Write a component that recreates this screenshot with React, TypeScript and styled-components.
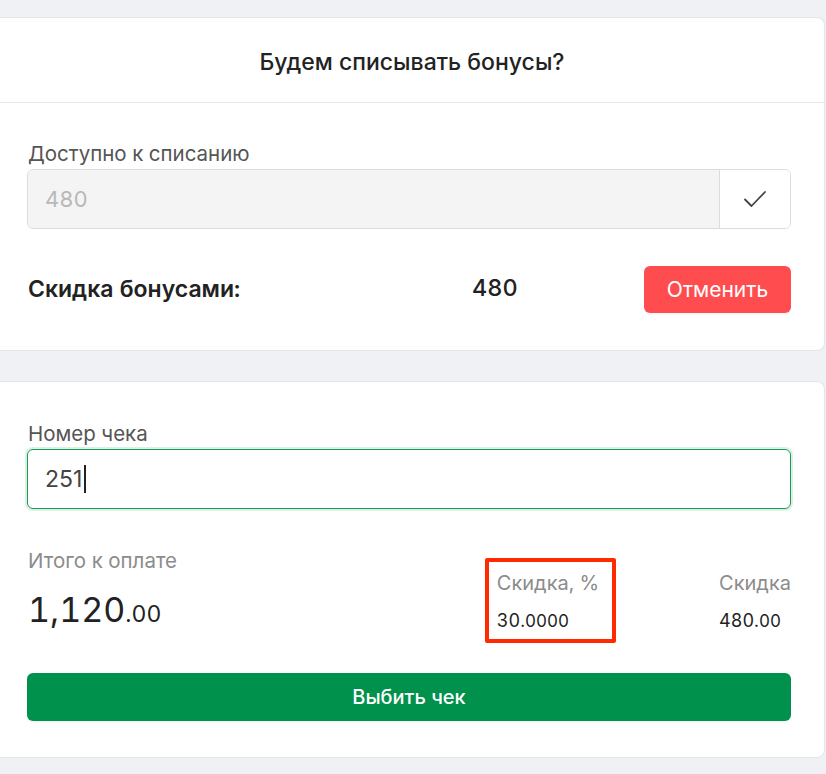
import React from "react";
import styled, { createGlobalStyle } from "styled-components";

const Global = createGlobalStyle`
  html, body { margin: 0; padding: 0; }
  body {
    background: #f0f1f5;
    font-family: Inter, "Noto Sans", "Liberation Sans", sans-serif;
    font-variant-numeric: tabular-nums;
    color: #222;
  }
`;

const Page = styled.div`
  padding-top: 17px;
  display: flex;
  flex-direction: column;
  gap: 30px;
  height: 774px;
  box-sizing: border-box;
  overflow: hidden;
`;

const Card = styled.section`
  background: #fff;
  border: 1px solid #e4e5e8;
  border-left: none;
  border-radius: 0 8px 8px 0;
  margin-right: 1px;
`;

const CardHeader = styled.header`
  height: 85px;
  box-sizing: border-box;
  padding-top: 3px;
  display: flex;
  align-items: center;
  justify-content: center;
  border-bottom: 1px solid #e6e6e6;
  font-size: 23px;
  font-weight: 500;
  color: #222;
`;

const CardBody = styled.div<{ $top: number; $bottom: number }>`
  padding: ${(p) => p.$top}px 33px ${(p) => p.$bottom}px 27px;
  display: flex;
  flex-direction: column;
`;

const Label = styled.div<{ $muted?: boolean }>`
  font-size: 20.5px;
  line-height: 24px;
  color: ${(p) => (p.$muted ? "#8c8c8c" : "#555")};
  margin-left: 1px;
  margin-bottom: 3px;
`;

const InputGroup = styled.div`
  display: flex;
  height: 60px;
  border: 1px solid #dcdcdc;
  border-radius: 6px;
  overflow: hidden;
  box-sizing: border-box;
`;

const DisabledField = styled.div`
  flex: 1;
  background: #f4f4f4;
  display: flex;
  align-items: center;
  padding-left: 17px;
  font-size: 22px;
  color: #b8b8b8;
`;

const Addon = styled.div`
  width: 70px;
  border-left: 1px solid #dcdcdc;
  display: flex;
  align-items: center;
  justify-content: center;
  background: #fff;
`;

const SummaryRow = styled.div`
  margin-top: 37px;
  display: grid;
  grid-template-columns: 445px auto 1fr;
  align-items: center;
`;

const Strong = styled.div`
  font-size: 23px;
  font-weight: 600;
  color: #222;
  margin-left: 1px;
  margin-top: -2px;
`;

const Amount = styled.div`
  font-size: 23.5px;
  font-weight: 500;
  color: #222;
  margin-top: -4px;
`;

const Button = styled.button<{ $variant: "danger" | "primary"; $block?: boolean }>`
  border: none;
  border-radius: 6px;
  font-family: inherit;
  font-size: ${(p) => (p.$variant === "primary" ? 20 : 21)}px;
  font-weight: ${(p) => (p.$variant === "primary" ? 500 : 400)};
  color: #fff;
  background: ${(p) => (p.$variant === "danger" ? "#ff4d4f" : "#00914c")};
  height: ${(p) => (p.$variant === "danger" ? 47 : 48)}px;
  width: ${(p) => (p.$block ? "100%" : "147px")};
  justify-self: end;
  box-shadow: 0 2px 0 rgba(0, 0, 0, 0.03);
  cursor: pointer;
`;

const FocusInput = styled.div`
  height: 60px;
  box-sizing: border-box;
  border: 1px solid #1a9a50;
  border-radius: 6px;
  box-shadow: 0 0 0 2px rgba(26, 154, 80, 0.15);
  display: flex;
  align-items: center;
  padding-left: 17px;
  font-size: 23px;
  color: #444;
  font-variant-numeric: proportional-nums;
`;

const Caret = styled.span`
  display: inline-block;
  width: 1.5px;
  height: 28px;
  background: #222;
  margin-left: 2px;
`;

const Totals = styled.div`
  margin-top: 49px;
  display: grid;
  grid-template-columns: 1fr auto auto;
  column-gap: 103px;
  align-items: start;
`;

const TotalCol = styled.div`
  display: flex;
  flex-direction: column;
  margin-top: -9px;
`;

const BigNumber = styled.div`
  font-size: 34px;
  line-height: 40px;
  color: #222;
  margin-top: 14px;
  margin-left: 1px;
  span { font-size: 23px; }
`;

const Highlight = styled.div`
  border: 4px solid #ff2a00;
  border-radius: 2px;
  padding: 9px 13px 6px 8px;
  display: flex;
  flex-direction: column;
`;

const StatCol = styled.div`
  display: flex;
  flex-direction: column;
  padding-top: 13px;
`;

const StatLabel = styled.div`
  font-size: 20px;
  line-height: 24px;
  color: #8c8c8c;
`;

const StatValue = styled.div`
  font-size: 18px;
  line-height: 24px;
  color: #222;
  margin-top: 14px;
  span { font-size: 17px; }
`;

const ActionWrap = styled.div`
  margin-top: 30px;
  display: flex;
`;

const Check = () => (
  <svg width="22" height="17" viewBox="0 0 22 17" fill="none" stroke="#444" strokeWidth="1.8" strokeLinecap="round" strokeLinejoin="round">
    <path d="M1 8.5L7.5 15L21 1" />
  </svg>
);

export default function App() {
  return (
    <>
      <Global />
      <Page>
        <Card>
          <CardHeader>Будем списывать бонусы?</CardHeader>
          <CardBody $top={39} $bottom={37}>
            <Label>Доступно к списанию</Label>
            <InputGroup>
              <DisabledField>480</DisabledField>
              <Addon>
                <Check />
              </Addon>
            </InputGroup>
            <SummaryRow>
              <Strong>Скидка бонусами:</Strong>
              <Amount>480</Amount>
              <Button $variant="danger">Отменить</Button>
            </SummaryRow>
          </CardBody>
        </Card>
        <Card>
          <CardBody $top={40} $bottom={36}>
            <Label>Номер чека</Label>
            <FocusInput>
              251
              <Caret />
            </FocusInput>
            <Totals>
              <TotalCol>
                <Label $muted>Итого к оплате</Label>
                <BigNumber>
                  1,120<span>.00</span>
                </BigNumber>
              </TotalCol>
              <Highlight>
                <StatLabel>Скидка, %</StatLabel>
                <StatValue>
                  30.<span>0000</span>
                </StatValue>
              </Highlight>
              <StatCol>
                <StatLabel>Скидка</StatLabel>
                <StatValue>
                  480.<span>00</span>
                </StatValue>
              </StatCol>
            </Totals>
            <ActionWrap>
              <Button $variant="primary" $block>
                Выбить чек
              </Button>
            </ActionWrap>
          </CardBody>
        </Card>
      </Page>
    </>
  );
}
